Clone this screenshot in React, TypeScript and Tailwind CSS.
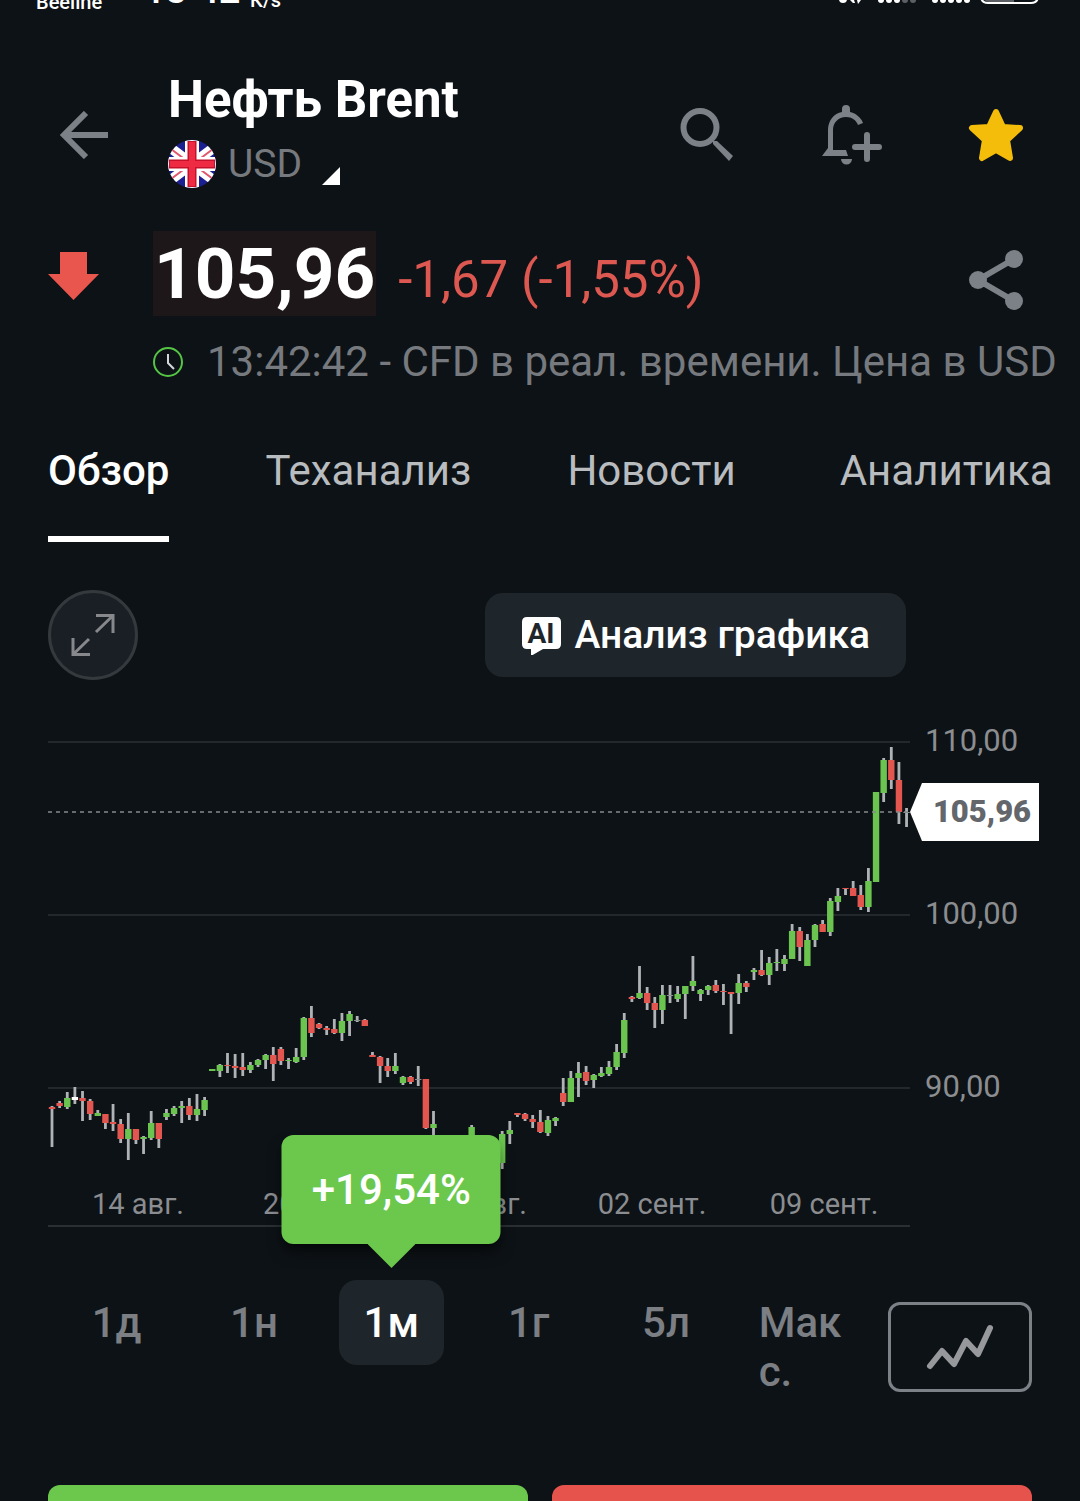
import { useState } from "react";
import clsx from "clsx";

type Kind = "g" | "r" | "n" | "w";
// slot, high, body top, body bottom, low, kind (chart units, y grows down)
type Candle = [number, number, number, number, number, Kind];

const candles: Candle[] = [
  [0, 366, 367, 369, 407, "r"],
  [1, 361, 363, 366, 368, "r"],
  [2, 352, 358, 367, 369, "g"],
  [3, 347, 357, 360, 364, "w"],
  [4, 351, 358, 361, 381, "r"],
  [5, 359, 361, 374, 380, "r"],
  [6, 370, 373, 376, 376, "g"],
  [7, 374, 374, 383, 389, "r"],
  [8, 364, 382, 384, 391, "r"],
  [9, 379, 384, 399, 403, "r"],
  [10, 373, 389, 399, 420, "g"],
  [11, 389, 389, 400, 404, "r"],
  [12, 396, 397, 399, 414, "g"],
  [13, 371, 383, 398, 400, "g"],
  [14, 383, 383, 399, 408, "r"],
  [15, 369, 373, 377, 380, "g"],
  [16, 366, 368, 374, 376, "g"],
  [17, 361, 366, 368, 383, "g"],
  [18, 358, 366, 375, 380, "r"],
  [19, 354, 369, 375, 381, "g"],
  [20, 357, 360, 370, 376, "g"],
  [21, 329, 329, 331, 331, "g"],
  [22, 324, 325, 331, 337, "g"],
  [23, 313, 325, 326, 333, "r"],
  [24, 314, 326, 328, 338, "r"],
  [25, 313, 327, 330, 336, "r"],
  [26, 322, 325, 330, 333, "g"],
  [27, 319, 320, 325, 327, "g"],
  [28, 314, 315, 320, 329, "g"],
  [29, 307, 315, 324, 341, "r"],
  [30, 307, 309, 321, 325, "r"],
  [31, 318, 320, 321, 329, "g"],
  [32, 308, 317, 322, 323, "g"],
  [33, 277, 278, 317, 320, "g"],
  [34, 266, 278, 293, 297, "r"],
  [35, 283, 284, 288, 289, "r"],
  [36, 286, 288, 290, 295, "r"],
  [37, 279, 289, 293, 294, "r"],
  [38, 273, 281, 293, 301, "g"],
  [39, 271, 274, 281, 296, "g"],
  [40, 276, 280, 281, 282, "n"],
  [41, 279, 280, 286, 286, "r"],
  [42, 312, 315, 317, 317, "r"],
  [43, 316, 317, 326, 343, "r"],
  [44, 318, 326, 331, 337, "r"],
  [45, 313, 326, 331, 334, "g"],
  [46, 336, 337, 343, 345, "g"],
  [47, 336, 337, 342, 344, "r"],
  [48, 326, 339, 340, 346, "n"],
  [49, 339, 339, 388, 389, "r"],
  [50, 371, 384, 388, 396, "g"],
  [55, 385, 387, 397, 400, "g"],
  [59, 391, 394, 423, 429, "g"],
  [60, 381, 390, 394, 404, "g"],
  [61, 373, 373, 375, 377, "r"],
  [62, 373, 374, 379, 381, "r"],
  [63, 375, 379, 382, 388, "r"],
  [64, 370, 382, 392, 393, "r"],
  [65, 376, 380, 393, 396, "g"],
  [66, 377, 378, 381, 386, "g"],
  [67, 338, 353, 362, 366, "r"],
  [68, 331, 338, 362, 362, "g"],
  [69, 322, 333, 338, 357, "g"],
  [70, 326, 332, 341, 345, "r"],
  [71, 334, 335, 340, 348, "g"],
  [72, 327, 333, 336, 337, "g"],
  [73, 321, 327, 334, 336, "g"],
  [74, 304, 312, 327, 330, "g"],
  [75, 273, 280, 313, 318, "g"],
  [76, 256, 257, 259, 262, "r"],
  [77, 226, 253, 258, 259, "g"],
  [78, 247, 253, 263, 270, "r"],
  [79, 257, 263, 270, 288, "r"],
  [80, 245, 255, 270, 284, "g"],
  [81, 245, 255, 256, 263, "n"],
  [82, 246, 254, 259, 262, "g"],
  [83, 246, 246, 254, 279, "g"],
  [84, 216, 241, 246, 251, "g"],
  [85, 249, 250, 254, 261, "g"],
  [86, 245, 246, 250, 255, "g"],
  [87, 240, 245, 251, 253, "r"],
  [88, 244, 251, 252, 265, "r"],
  [89, 252, 252, 254, 294, "r"],
  [90, 234, 243, 253, 264, "g"],
  [91, 241, 243, 247, 252, "r"],
  [92, 228, 230, 232, 240, "g"],
  [93, 210, 230, 235, 236, "r"],
  [94, 217, 223, 235, 245, "g"],
  [95, 209, 222, 223, 231, "g"],
  [96, 215, 219, 224, 231, "g"],
  [97, 184, 191, 219, 219, "g"],
  [98, 187, 191, 207, 221, "r"],
  [99, 194, 200, 226, 226, "g"],
  [100, 184, 185, 200, 207, "g"],
  [101, 180, 184, 192, 192, "r"],
  [102, 158, 161, 192, 196, "g"],
  [103, 148, 156, 162, 171, "g"],
  [104, 148, 148, 149, 155, "r"],
  [105, 141, 148, 156, 156, "r"],
  [106, 145, 155, 167, 170, "r"],
  [107, 128, 141, 167, 172, "g"],
  [108, 52, 52, 142, 142, "g"],
  [109, 18, 20, 53, 62, "g"],
  [110, 7, 20, 40, 49, "r"],
  [111, 22, 40, 72, 84, "r"],
  [112, 68, 72, 73, 87, "n"],
];

const fills: Record<Kind, string> = {
  g: "#6bc44f",
  r: "#e2564f",
  n: "#8d9093",
  w: "#ffffff",
};

const priceTicks = [
  { label: "110,00", y: 2 },
  { label: "100,00", y: 175 },
  { label: "90,00", y: 348 },
];

const dateTicks = [
  { label: "14 авг.", x: 90 },
  { label: "20 авг.", x: 261 },
  { label: "26 авг.", x: 433 },
  { label: "02 сент.", x: 604 },
  { label: "09 сент.", x: 776 },
];

const tabs = ["Обзор", "Теханализ", "Новости", "Аналитика"];
const ranges = ["1д", "1н", "1м", "1г", "5л", "Макс."];

function StatusBar() {
  return (
    <div className="flex h-3 items-end justify-between overflow-hidden pr-10 pl-9 text-white">
      <div className="flex items-end">
        <span className="w-27 pb-[2px] text-[20px] leading-4 font-medium">Beeline</span>
        <span className="w-[106px] pb-2 text-[38px] leading-7 font-medium">
          13<span className="align-[8px]">:</span>42
        </span>
        <span className="pb-[6px] text-[20px] leading-3 font-medium">К/s</span>
      </div>
      <svg width="202" height="12" viewBox="838 0 202 12" aria-hidden="true">
        <g fill="#fff">
          <circle cx="843" cy="-1" r="4" />
          <path d="M850 0h4l1 3h-2zM857 0h4l-3 4z" />
          <circle cx="881" cy="0" r="3" />
          <circle cx="889" cy="0" r="3" />
          <circle cx="897" cy="0" r="3" />
          <circle cx="935" cy="0" r="3" />
          <circle cx="943" cy="0" r="3" />
          <circle cx="951" cy="0" r="3" />
          <circle cx="959" cy="0" r="3" />
          <circle cx="967" cy="0" r="3" />
        </g>
        <g fill="#5c6064">
          <circle cx="905" cy="0" r="3" />
          <circle cx="913" cy="0" r="3" />
          <path d="M984 0h30v2h-26z" />
        </g>
        <path d="M981 -4q0 7 7 7h43q7 0 7 -7" fill="none" stroke="#fff" strokeWidth="2" />
      </svg>
    </div>
  );
}

function UkFlag() {
  return (
    <svg width="48" height="48" viewBox="0 0 48 48" aria-hidden="true">
      <clipPath id="flag">
        <circle cx="24" cy="24" r="24" />
      </clipPath>
      <g clipPath="url(#flag)">
        <path fill="#1b1f8f" d="M0 0h48v48H0z" />
        <path stroke="#fff" strokeWidth="10" d="M0 6l48 36M48 6L0 42" />
        <path stroke="#e0566a" strokeWidth="2" d="M3 9l12 9M45 9L33 18M3 39l12-9M45 39L33 30" />
        <path stroke="#fff" strokeWidth="14" d="M24 0v48M0 24h48" />
        <path stroke="#c5122c" strokeWidth="9" d="M24 1v46M1 24h46" />
        <path stroke="#ee2b42" strokeWidth="6" d="M24 2v44M2 24h44" />
      </g>
    </svg>
  );
}

function Header() {
  return (
    <header className="flex items-center pt-12 pr-14 pl-15">
      <button type="button" aria-label="Назад" className="w-[108px] pt-3">
        <svg width="48" height="48" viewBox="0 0 48 48" fill="none" stroke="#7c8087" strokeWidth="6">
          <path d="M3 24h45M26 2L4 24l22 22" />
        </svg>
      </button>
      <div className="flex-1">
        <h1 className="pt-[10px] text-[51px] leading-[60px] font-bold text-white">Нефть Brent</h1>
        <button type="button" className="flex h-17 items-center gap-3 text-[39px] leading-none text-[#76797d]">
          <UkFlag />
          USD
          <svg className="mt-6 ml-2" width="18" height="18" viewBox="0 0 18 18" fill="#fff" aria-hidden="true">
            <path d="M18 0v18H0z" />
          </svg>
        </button>
      </div>
      <div className="flex items-center pt-3">
        <button type="button" aria-label="Поиск" className="mr-[88px]">
          <svg width="54" height="60" viewBox="0 0 54 60" fill="none" stroke="#7c8087">
            <circle cx="20" cy="22.500" r="16.500" strokeWidth="6" />
            <path d="M33 36h4l16 15-4 5-16-17z" fill="#7c8087" stroke="none" />
          </svg>
        </button>
        <button type="button" aria-label="Добавить оповещение" className="mr-[86px]">
          <svg width="60" height="60" viewBox="0 0 60 60" fill="#7c8087">
            <path d="M20 4a4 4 0 0 1 8 0v3c5 1 11 5 13 11l-5 2c-2-5-6-8-12-8-8 0-13 6-13 13v20h13l2 6H0l6-8V25C6 16 12 8 20 7z" />
            <path d="M19 54h11a5 5 0 0 1-11 0z" />
            <path d="M45 30v24M33 42h24" stroke="#7c8087" strokeWidth="6" strokeLinecap="round" />
          </svg>
        </button>
        <button type="button" aria-label="В избранном">
          <svg width="56" height="60" viewBox="0 0 56 60" fill="#f4bd0a" stroke="#f4bd0a" strokeWidth="6" strokeLinejoin="round">
            <path d="M28 7l7 15 17 1-13 12 3 18-14-8-14 8 3-18L4 23l17-1z" />
          </svg>
        </button>
      </div>
    </header>
  );
}

function Quote() {
  return (
    <section className="pl-12">
      <div className="flex items-center pt-[33px] pr-14">
        <div className="mr-[54px] pt-1">
          <svg width="51" height="48" viewBox="0 0 51 48" fill="#e9564e" aria-hidden="true">
            <path d="M12 0h27v22h12L25.500 48 0 22h12z" />
          </svg>
        </div>
        <span className="bg-[#1e171a] px-px text-[71px] leading-[85px] font-bold text-white">105,96</span>
        <span className="flex-1 pt-3 pl-[22px] text-[51px] leading-[60px] whitespace-nowrap text-[#dc5850]">-1,67 (-1,55%)</span>
        <button type="button" aria-label="Поделиться" className="pt-3">
          <svg width="56" height="60" viewBox="0 0 56 60" fill="#7c8087">
            <path d="M46 9L10 30l36 21" fill="none" stroke="#7c8087" strokeWidth="6" />
            <circle cx="46" cy="9" r="9" />
            <circle cx="10" cy="30" r="9" />
            <circle cx="46" cy="51" r="9" />
          </svg>
        </button>
      </div>
      <div className="flex items-center gap-6 pt-[21px] pl-[105px]">
        <svg className="shrink-0" width="30" height="30" viewBox="0 0 30 30" fill="none" strokeWidth="2" aria-hidden="true">
          <circle cx="15" cy="15" r="14" stroke="#55c545" />
          <path d="M15 7v9l6 6" stroke="#d5d8da" />
        </svg>
        <p className="text-[42px] leading-[50px] whitespace-nowrap text-[#76797d]">
          13:42:42 - CFD в реал. времени. Цена в USD
        </p>
      </div>
    </section>
  );
}

function Chart() {
  return (
    <svg className="block w-full" viewBox="0 -16 1032 504" role="img" aria-label="График цены">
      {priceTicks.map((t) => (
        <g key={t.label}>
          <path d={`M0 ${t.y}H862`} stroke="#2a3035" strokeWidth="1.500" />
          <text x="877" y={t.y + 9} fontSize="31" fill="#8b8d90">
            {t.label}
          </text>
        </g>
      ))}
      <path d="M0 486H862" stroke="#2a2f33" strokeWidth="2" />

      {candles.map(([slot, high, top, bottom, low, kind]) => {
        const x = 4 + slot * 7.63;
        return (
          <g key={slot}>
            <rect x={x - 1.4} y={high} width="2.800" height={low - high} fill="#b0b3b6" />
            <rect x={x - 3.2} y={top} width="6.400" height={bottom - top} fill={fills[kind]} />
          </g>
        );
      })}

      {dateTicks.map((t) => (
        <text key={t.label} x={t.x} y="474" fontSize="29" fill="#8b8d90" textAnchor="middle">
          {t.label}
        </text>
      ))}

      {/* last price */}
      <path d="M0 72H862" stroke="#85898c" strokeWidth="1.500" strokeDasharray="4 4" />
      <path d="M862 72L874 43H991V101H874Z" fill="#fff" />
      <text x="934" y="82" fontSize="31" fontWeight="900" fill="#63666a" textAnchor="middle">
        105,96
      </text>
    </svg>
  );
}

export default function App() {
  const [tab, setTab] = useState("Обзор");
  const [range, setRange] = useState("1м");

  return (
    <div className="min-h-screen overflow-hidden bg-[#0d1216] font-[Roboto,sans-serif]">
      <StatusBar />
      <Header />
      <Quote />

      {/* Tabs */}
      <nav className="flex gap-24 pt-[59px] pl-12">
        {tabs.map((name) => (
          <button
            key={name}
            type="button"
            onClick={() => setTab(name)}
            className={clsx(
              "border-b-6 pb-10 text-[42px] leading-[50px] whitespace-nowrap last:ml-2",
              tab === name
                ? "border-white font-medium text-white"
                : "border-transparent text-[#b9bcbf]"
            )}
          >
            {name}
          </button>
        ))}
      </nav>

      <main>
        <div className="flex items-center justify-between pt-12 pr-[174px] pl-12">
          <button
            type="button"
            aria-label="На весь экран"
            className="flex size-[90px] items-center justify-center rounded-full border-3 border-[#34393e] bg-[#1a1f25]"
          >
            <svg width="44" height="44" viewBox="0 0 44 44" fill="none" stroke="#86888b" strokeWidth="3">
              <path d="M25 2.500h17V20M42 2.500L25 19M2 25v16.500h17M2 41.500L18 26" />
            </svg>
          </button>
          <button
            type="button"
            className="flex h-21 items-center gap-3 rounded-[18px] bg-[#1f262b] px-9 text-[39px] leading-none font-medium text-white"
          >
            <svg width="41" height="40" viewBox="0 0 41 40" aria-hidden="true">
              <path fill="#fff" d="M6 2h29q5 0 5 5v22q0 5-5 5H22L10 41v-7H6q-5 0-5-5V7q0-5 5-5z" />
              <text x="20" y="28" fontSize="28" fontWeight="700" fill="#1f262b" textAnchor="middle">
                AI
              </text>
            </svg>
            Анализ графика
          </button>
        </div>

        <div className="pt-11 pl-12">
          <Chart />
        </div>

        {/* Ranges */}
        <div className="flex items-start pt-13 pr-12 pl-12">
          <div className="grid flex-1 grid-cols-6">
            {ranges.map((name) => (
              <div key={name} className="relative mx-4">
                <button
                  type="button"
                  onClick={() => setRange(name)}
                  className={clsx(
                    "min-h-[85px] w-full rounded-[18px] px-2 pt-[18px] text-[42px] leading-[49px] font-medium break-all",
                    range === name ? "bg-[#1f262b] text-white" : "text-[#7b7e83]",
                    name.length > 2 ? "text-left" : "pb-[18px] text-center"
                  )}
                >
                  {name}
                </button>
                {range === name && (
                  <div className="absolute bottom-full left-1/2 mb-9 flex h-[109px] w-[219px] -translate-x-1/2 items-center justify-center rounded-xl bg-[#6bc84d] text-[42px] font-medium text-white shadow-lg shadow-black/50">
                    +19,54%
                    <svg className="absolute top-full" width="48" height="24" viewBox="0 0 48 24" fill="#6bc84d" aria-hidden="true">
                      <path d="M0 0h48L24 24z" />
                    </svg>
                  </div>
                )}
              </div>
            ))}
          </div>
          <button
            type="button"
            aria-label="Тип графика"
            className="mt-[22px] ml-4 flex h-[90px] w-36 items-center justify-center rounded-xl border-3 border-[#7c8087]"
          >
            <svg width="68" height="46" viewBox="0 0 68 46" fill="none" stroke="#96989b" strokeWidth="6" strokeLinecap="round" strokeLinejoin="round">
              <path d="M4 42l12-15 12 13 12-23 12 13L64 4" />
            </svg>
          </button>
        </div>
      </main>

      <footer className="grid grid-cols-2 gap-6 px-12 pt-[89px]">
        <button type="button" aria-label="Купить" className="h-4 rounded-t-xl bg-[#6bc84d]" />
        <button type="button" aria-label="Продать" className="h-4 rounded-t-xl bg-[#e6534c]" />
      </footer>
    </div>
  );
}
